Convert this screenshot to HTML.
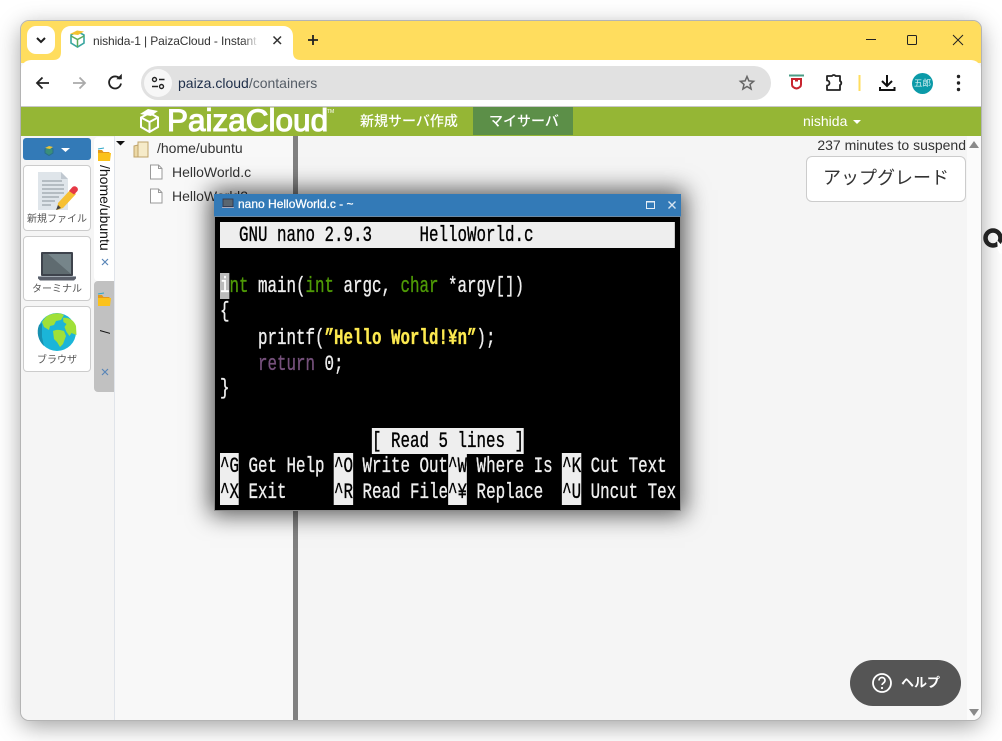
<!DOCTYPE html>
<html lang="ja"><head><meta charset="utf-8"><title>nishida-1 | PaizaCloud</title>
<style>
*{box-sizing:border-box}
html,body{margin:0;width:1002px;height:741px;overflow:hidden;background:#fff;font-family:"Liberation Sans","Noto Sans CJK JP",sans-serif}
.a{position:absolute}
svg{position:absolute;overflow:visible}
#win{left:21px;top:21px;width:960px;height:699px;border-radius:9px;background:#f5f5f5;box-shadow:0 6px 24px rgba(0,0,0,.38)}
.t{white-space:nowrap;line-height:1}
.card{position:absolute;left:23px;width:68px;background:#fff;border:1px solid #ccc;border-radius:4px}
.cap{position:absolute;left:0;right:0;text-align:center;font-size:10px;color:#555;line-height:12px;white-space:nowrap}
.row{position:absolute;left:220px;height:25.7px;width:634px;font:22px/27.7px "Liberation Mono",monospace;color:#eee;white-space:pre;transform:scaleX(.7197);transform-origin:0 0;-webkit-text-stroke:.35px currentColor}
.row b{font-weight:400}
.i{display:inline-block;height:26px;vertical-align:top;background:#eee;color:#000}
.g{color:#4e9a06}
.y{color:#fce94f;font-weight:700!important}
.p{color:#75507b}
</style></head>
<body>
<div class="a" id="win"></div>
<div class="a" style="left:20px;top:20px;width:962px;height:701px;border-radius:9px;overflow:hidden;border:1px solid #b4b4b4">
  <div class="a" style="left:0;top:0;width:960px;height:42px;background:#ffdd5e"></div>
  <div class="a" style="left:0;top:39px;width:960px;height:48px;background:#fff;border-radius:10px 10px 0 0"></div>
  <div class="a" style="left:0;top:85px;width:960px;height:2px;background:#c8c8c8"></div>
  <div class="a" style="left:0;top:86px;width:960px;height:30px;background:#95b635"></div>
  <div class="a" style="left:0;top:115px;width:960px;height:584px;background:#f5f5f5"></div>
  <div class="a" style="left:946px;top:115px;width:14px;height:584px;background:#fbfbfb"></div>
</div>

<!-- tab strip -->
<div class="a" style="left:27px;top:26px;width:28px;height:28px;background:#fff;border-radius:9px"></div>
<svg style="left:0;top:0" width="1002" height="120" fill="none">
  <path d="M37 38l4 4 4-4" stroke="#1f1f1f" stroke-width="2"/>
  <path d="M53 60c6 0 8-3 8-8V36c0-6 4-10 10-10h212c6 0 10 4 10 10v16c0 5 2 8 8 8z" fill="#fff"/>
  <path d="M71 35l6.500-3.500 6.500 3.500v8l-6.500 4-6.500-4z" stroke="#3aa6a0" stroke-width="1.600"/>
  <path d="M71 36l6.500 3.500 6.500-3.500M77.500 39.500V47" stroke="#5cab5a" stroke-width="1.500"/>
  <path d="M70 34l7-3.500 7 1-6 3.500z" fill="#f2c230"/>
  <path d="M273.500 36.500l7.500 7.500M281 36.500l-7.500 7.500" stroke="#333" stroke-width="1.500"/>
  <path d="M313 35v10M308 40h10" stroke="#222" stroke-width="1.800"/>
  <!-- win controls -->
  <path d="M866 39.500h10" stroke="#222" stroke-width="1"/>
  <rect x="907.500" y="35.500" width="9" height="9" rx="1" stroke="#222"/>
  <path d="M953 35l10 10M963 35l-10 10" stroke="#222" stroke-width="1"/>
  <!-- nav -->
  <path d="M49 83H37M42.500 77.500L37 83l5.500 5.500" stroke="#222" stroke-width="1.800"/>
  <path d="M85 83H73M79.500 77.500L85 83l-5.500 5.500" stroke="#aaa" stroke-width="1.800"/>
  <path d="M120 79a6 6 0 1 0 1 4.500" stroke="#222" stroke-width="1.800"/>
  <path d="M117 78h4.500v-4.500z" fill="#222" stroke="#222" stroke-width=".6" transform="translate(0 1)"/>
</svg>
<div class="t a" style="left:93px;top:34px;width:166px;overflow:hidden;font-size:12px;letter-spacing:-.1px;color:#333;line-height:14px">nishida-1 | PaizaCloud - Instant</div>
<div class="a" style="left:243px;top:30px;width:16px;height:20px;background:linear-gradient(90deg,rgba(255,255,255,0),#fff)"></div>

<!-- address -->
<div class="a" style="left:141px;top:66px;width:630px;height:34px;border-radius:17px;background:#e1e1e1"></div>
<div class="a" style="left:144px;top:69px;width:28px;height:28px;border-radius:14px;background:#f7f7f7"></div>
<svg style="left:0;top:0" width="1002" height="120" fill="none">
  <circle cx="154.500" cy="79.500" r="2" stroke="#222" stroke-width="1.400"/><path d="M159 79.500h5.500M152 86.500h6" stroke="#222" stroke-width="1.500"/><circle cx="161.500" cy="86.500" r="2" stroke="#222" stroke-width="1.400"/>
  <path d="M747 76.500l1.900 4.400 4.700.4-3.600 3.100 1.100 4.600-4.100-2.500-4.100 2.500 1.100-4.600-3.600-3.100 4.700-.4z" stroke="#666" stroke-width="1.500"/>
  <path d="M789 75.500h15" stroke="#4a9c85" stroke-width="2"/>
  <path d="M792 79h9v5.500c0 2.500-2 3.500-4.500 4-2.500-.5-4.500-1.500-4.500-4z" stroke="#c8242e" stroke-width="2"/><path d="M795 79v2.500h3V79" fill="#c8242e"/>
  <path d="M827 76h5a2 2 0 0 1 3.500 0h4.500v5a2.200 2.200 0 0 1 0 4v5h-13v-4.500a2.500 2.500 0 0 0 0-5z" stroke="#222" stroke-width="1.800" stroke-linejoin="round"/>
  <path d="M859.500 75v16" stroke="#ffdd5e" stroke-width="2"/>
  <path d="M887 75v10M882 81l5 5 5-5" stroke="#111" stroke-width="2"/><path d="M880 87v3h14.500v-3" stroke="#111" stroke-width="2"/>
  <circle cx="958.500" cy="76.500" r="1.700" fill="#222"/><circle cx="958.500" cy="83" r="1.700" fill="#222"/><circle cx="958.500" cy="89.500" r="1.700" fill="#222"/>
</svg>
<div class="t a" style="left:178px;top:76px;font-size:14px;line-height:15px;color:#1f2f4a">paiza.cloud<span style="color:#555d66">/containers</span></div>
<div class="a" style="left:912px;top:73px;width:21px;height:21px;border-radius:50%;background:#0b9aa8;color:#d8f2f4;font-size:8.500px;line-height:21px;text-align:center">五郎</div>

<!-- header -->
<svg style="left:0;top:0" width="1002" height="140" fill="none">
  <path d="M149.500 113l8.500 4.500v9.500l-8.500 5-8.500-5v-9.500z" stroke="#fff" stroke-width="2"/>
  <path d="M141 117.500l8.500 4.500 8.500-4.500M149.500 122v10" stroke="#fff" stroke-width="2"/>
  <path d="M140 114l8-5 10 2-7 5z" fill="#fff"/>
  <path d="M853 120h8l-4 4z" fill="#fff"/>
</svg>
<div class="t a" style="left:167px;top:105px;font-size:31.500px;line-height:31px;font-weight:400;color:#fff;-webkit-text-stroke:1.100px #fff">PaizaCloud</div>
<div class="t a" style="left:327px;top:109px;font-size:5px;line-height:6px;color:#fff">TM</div>
<div class="t a" style="left:360px;top:112px;font-size:14px;line-height:18px;font-weight:500;color:#fff">新規サーバ作成</div>
<div class="a" style="left:473px;top:107px;width:100px;height:28px;background:#5c8f48"></div>
<div class="t a" style="left:489px;top:112px;font-size:14px;line-height:18px;font-weight:500;color:#fff">マイサーバ</div>
<div class="t a" style="left:803px;top:113px;font-size:14px;line-height:16px;color:#fff">nishida</div>

<!-- tree panel -->
<div class="a" style="left:114px;top:136px;width:179px;height:584px;background:#f8f8f8;border-left:1px solid #e0e4ea"></div>
<div class="a" style="left:293px;top:136px;width:5px;height:584px;background:#808080"></div>

<!-- sidebar -->
<div class="a" style="left:23px;top:138px;width:68px;height:22px;background:#337ab7;border-radius:3px"></div>
<div class="card" style="top:165px;height:66px"><div class="cap" style="top:48px">新規ファイル</div></div>
<div class="card" style="top:236px;height:65px"><div class="cap" style="top:47px">ターミナル</div></div>
<div class="card" style="top:306px;height:66px"><div class="cap" style="top:48px">ブラウザ</div></div>

<div class="a" style="left:94px;top:137px;width:20px;height:144px;background:#fff;border-radius:4px 0 0 4px"></div>
<div class="a" style="left:94px;top:281px;width:20px;height:111px;background:#c1c1c1;border-radius:4px 0 0 4px"></div>
<div class="t a" style="left:98px;top:165px;writing-mode:vertical-rl;font-size:14px;line-height:14px;color:#111">/home/ubuntu</div>
<div class="t a" style="left:98px;top:330px;writing-mode:vertical-rl;font-size:14px;line-height:14px;color:#111">/</div>

<svg style="left:0;top:0" width="1002" height="420" fill="none">
  <!-- small cube in button -->
  <path d="M45 149l4-2.500 4 2.500v4l-4 2.500-4-2.500z" fill="#3a8f7a" stroke="#2b6f88"/><path d="M45 148l4-2 4 1-3 2z" fill="#e9c43a"/>
  <path d="M61 148h9l-4.500 4z" fill="#fff"/>
  <!-- doc icon -->
  <path d="M38 172h23l7 7v31H38z" fill="#dfe5ea"/><path d="M61 172l7 7h-7z" fill="#c0c8d0"/>
  <path d="M42 181h20M42 185h22M42 189h22M42 193h22M42 197h17M42 201h13M42 205h9" stroke="#9aa3aa" stroke-width="1.200"/>
  <path d="M58 203l13-14 5 5-13 14-6 2z" fill="#f6c033"/><path d="M69 191l3-3.500c1.500-1.500 3-1.500 4.500-.5s2 3 .5 4.500l-3 3z" fill="#e63946"/><path d="M56 210l2-5 3 3z" fill="#444"/>
  <!-- laptop -->
  <rect x="41" y="252" width="32" height="24" rx="1" fill="#3e434c"/>
  <rect x="43" y="254" width="28" height="20" fill="#5f6b70"/><path d="M48 254h23v20z" fill="#76858a"/>
  <path d="M38 276h38v2.500l-2 2H40l-2-2z" fill="#5a5f6a"/><path d="M38 276.500h38" stroke="#9fa7b0"/>
  <!-- globe -->
  <circle cx="57" cy="332" r="19" fill="#1bb5d8"/>
  <path d="M44 346a19 19 0 0 1-5-21l3-2v14z" fill="#1790b0"/>
  <path d="M47 316c6-3 12-4 17-1l-3 5-5 1-2 4-4 1-1 4-5-3-2-5 3-4zM53 331c4-2 8-1 11 0l2 5-3 8-3 3-3-5-3-3zM63 318c5-1 11 2 13 8l.5 9-5-2-2 3-3-4-2-5 2-3-3-2z" fill="#a0e038"/>
  <!-- folders -->
  <path d="M98 150h4l1.500 2h6v2h-11.500z" fill="#e59a1a"/><path d="M98 153h13l-1 8H98z" fill="#fbc21b"/>
  <path d="M98 149l6-1" stroke="#2fa8c8" stroke-width="1"/>
  <path d="M98 295h4l1.500 2h6v2h-11.500z" fill="#e59a1a"/><path d="M98 298h13l-1 8H98z" fill="#fbc21b"/>
  <path d="M98 294l6-1" stroke="#2fa8c8" stroke-width="1"/>
  <path d="M102 259l6 6M108 259l-6 6M102 369l6 6M108 369l-6 6" stroke="#5a86b8" stroke-width="1.200"/>
  <!-- tree -->
  <path d="M116 141h9l-4.500 4.500z" fill="#111"/>
  <path d="M134 146l4-1v12h-4z" fill="#ecd9a6" stroke="#bfa36a"/><path d="M138 142h10v15h-10z" fill="#f6ebc9" stroke="#bfa36a"/>
  <path d="M150.500 165h8l3.500 3.500V179h-11.500zM150.500 189h8l3.500 3.500V203h-11.500z" fill="#fff" stroke="#9a9a9a"/>
  <path d="M158.500 165v3.500h3.500M158.500 189v3.500h3.500" stroke="#9a9a9a"/>
  <!-- scroll arrows -->
  <path d="M974 141l5 7h-10z" fill="#8a8a8a"/>
</svg>
<div class="t a" style="left:157px;top:140px;font-size:14px;line-height:16px;color:#333">/home/ubuntu</div>
<div class="t a" style="left:172px;top:164px;font-size:14px;line-height:16px;color:#333">HelloWorld.c</div>
<div class="t a" style="left:172px;top:188px;font-size:14px;line-height:16px;color:#333">HelloWorld2</div>

<!-- top right -->
<div class="t a" style="right:36px;top:137px;font-size:14px;line-height:16px;color:#333">237 minutes to suspend</div>
<div class="a" style="left:806px;top:156px;width:160px;height:46px;background:#fff;border:1px solid #ccc;border-radius:6px;text-align:center;font-size:18px;line-height:42px;color:#333">アップグレード</div>

<!-- terminal -->
<div class="a" style="left:214px;top:194px;width:467px;height:317px;background:#000;border:1px solid #8a8a8a;box-shadow:0 0 22px 4px rgba(0,0,0,.65)"></div>
<div class="a" style="left:214px;top:194px;width:467px;height:23px;background:#337ab7;border-bottom:1px solid #6c8aa5"></div>
<div class="t a" style="left:238px;top:197px;font-size:12px;line-height:14px;font-weight:400;color:#fff;-webkit-text-stroke:.25px #fff">nano HelloWorld.c - ~</div>
<svg style="left:0;top:0" width="1002" height="230" fill="none">
  <rect x="223" y="199" width="10" height="7.500" fill="#5a6670" stroke="#334"  stroke-width=".8"/><path d="M222 207.500h12" stroke="#aab"/>
  <rect x="646.500" y="201.500" width="8" height="7" stroke="#e6eef6" stroke-width="1"/><path d="M646.500 202h8" stroke="#e6eef6" stroke-width="1"/>
  <path d="M668.500 201.500l7 7M675.500 201.500l-7 7" stroke="#d7e5f2" stroke-width="1.400"/>
</svg>
<div class="row" style="top:222px;height:26px;width:632px;background:#eee;color:#000">  GNU nano 2.9.3     HelloWorld.c</div>
<div class="row" style="top:273px"><span class="i" style="background:#bbb;color:#fff">i</span><span class="g">nt</span> main(<span class="g">int</span> argc, <span class="g">char</span> *argv[])</div>
<div class="row" style="top:297.500px">{</div>
<div class="row" style="top:324.500px">    printf(<b class="y">”Hello World!¥n”</b>);</div>
<div class="row" style="top:351px">    <span class="p">return</span> 0;</div>
<div class="row" style="top:375px">}</div>
<div class="row" style="top:428px">                <span class="i">[ Read 5 lines ]</span></div>
<div class="row" style="top:453px"><span class="i">^G</span> Get Help <span class="i">^O</span> Write Out<span class="i">^W</span> Where Is <span class="i">^K</span> Cut Text</div>
<div class="row" style="top:479px"><span class="i">^X</span> Exit     <span class="i">^R</span> Read File<span class="i">^¥</span> Replace  <span class="i">^U</span> Uncut Tex</div>

<!-- help -->
<div class="a" style="left:850px;top:660px;width:111px;height:46px;border-radius:23px;background:#555"></div>
<svg style="left:0;top:0" width="1002" height="741" fill="none">
  <circle cx="882" cy="683" r="9" stroke="#fff" stroke-width="1.800"/>
  <path d="M879 680.500c0-4 6-4 6 0 0 2.500-3 2.500-3 4.500" stroke="#fff" stroke-width="1.700"/><circle cx="882" cy="688" r="1.100" fill="#fff"/>
  <path d="M969 709h10l-5 7z" fill="#8a8a8a"/>
  <circle cx="993" cy="238" r="7.500" stroke="#222" stroke-width="4.500"/>
  <path d="M997 240l8 9-4 0 1 4-2 1-2-4z" fill="#fff"/>
</svg>
<div class="t a" style="left:901px;top:674px;font-size:13px;line-height:18px;font-weight:700;color:#fff">ヘルプ</div>
</body></html>
